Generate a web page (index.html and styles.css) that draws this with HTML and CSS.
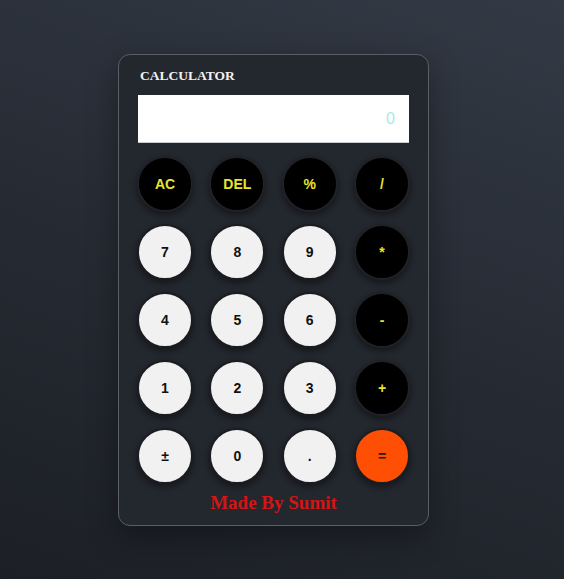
FILE: index.html
```html
<!DOCTYPE html>
<html>
<head>
<meta charset="utf-8">
<link rel="stylesheet" href="styles.css">
</head>
<body>
<div class="calc">
  <div class="title">CALCULATOR</div>
  <div class="display">0</div>
  <div class="keys">
    <button class="key dark">AC</button>
    <button class="key dark">DEL</button>
    <button class="key dark">%</button>
    <button class="key dark">/</button>
    <button class="key light">7</button>
    <button class="key light">8</button>
    <button class="key light">9</button>
    <button class="key dark small">*</button>
    <button class="key light">4</button>
    <button class="key light">5</button>
    <button class="key light">6</button>
    <button class="key dark">-</button>
    <button class="key light">1</button>
    <button class="key light">2</button>
    <button class="key light">3</button>
    <button class="key dark">+</button>
    <button class="key light">±</button>
    <button class="key light">0</button>
    <button class="key light">.</button>
    <button class="key equal">=</button>
  </div>
  <div class="footer">Made By Sumit</div>
</div>
</body>
</html>
```

FILE: styles.css
```css
html, body {
  margin: 0;
  height: 100%;
}
body {
  background: linear-gradient(200deg, #333a45 0%, #272c35 45%, #1c1f25 100%);
  padding: 54px 0 0 118px;
  box-sizing: border-box;
  font-family: "Liberation Sans", Arial, sans-serif;
}
.calc {
  width: 311px;
  box-sizing: border-box;
  padding: 13px 19px 12px 19px;
  background: #23272e;
  border: 1px solid #5a5f66;
  border-radius: 12px;
  box-shadow: 0 10px 30px rgba(0,0,0,0.35);
}
.title {
  font-family: "Liberation Serif", "Times New Roman", serif;
  font-weight: bold;
  font-size: 13.5px;
  color: #f2f2f2;
  margin-left: 2px;
  line-height: 16px;
}
.display {
  margin-top: 11px;
  height: 48px;
  background: #ffffff;
  border-bottom: 1px solid #c8cdd2;
  box-sizing: border-box;
  text-align: right;
  padding-right: 14px;
  font-size: 16px;
  line-height: 47px;
  color: #a9ece0;
}
.keys {
  margin-top: 13px;
  display: grid;
  grid-template-columns: repeat(4, 56px);
  justify-content: space-between;
  row-gap: 12px;
  margin-left: -1px;
  margin-right: -1px;
}
.key {
  width: 56px;
  height: 56px;
  border-radius: 50%;
  padding: 0;
  font-family: "Liberation Sans", Arial, sans-serif;
  font-weight: bold;
  font-size: 14px;
  border: 2px solid #1b1d21;
  box-shadow: 0 3px 6px rgba(0,0,0,0.45);
  cursor: pointer;
}
.dark {
  background: #000000;
  color: #e8e62c;
  border-color: #202226;
}
.light {
  background: #f1f1f1;
  color: #111;
}
.equal {
  background: #fe4f05;
  color: #1a1a1a;
  border-color: #1b1d21;
}
.footer {
  margin-top: 8px;
  text-align: center;
  font-family: "Liberation Serif", "Times New Roman", serif;
  font-weight: bold;
  font-size: 19px;
  color: #d41515;
  line-height: 21px;
}
```
